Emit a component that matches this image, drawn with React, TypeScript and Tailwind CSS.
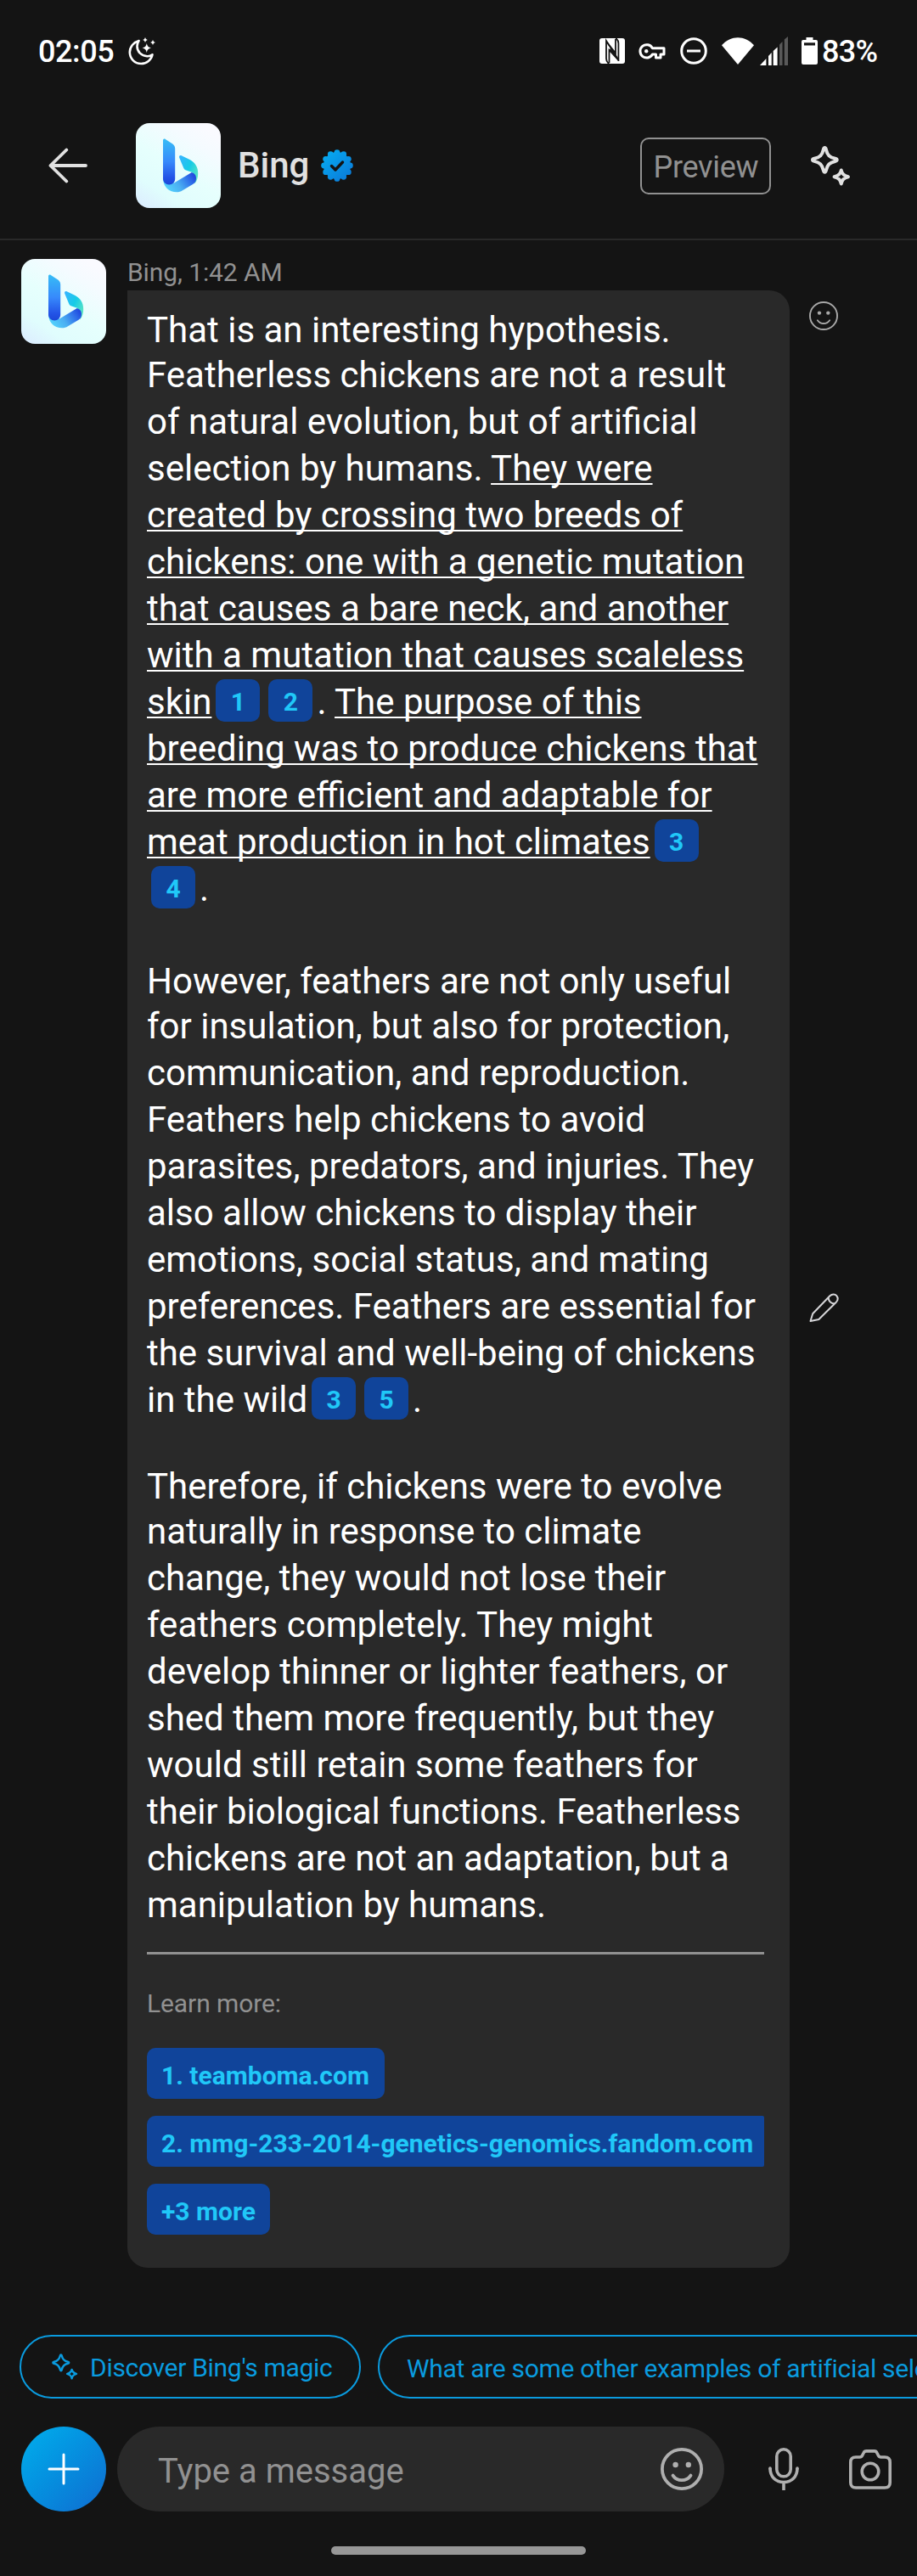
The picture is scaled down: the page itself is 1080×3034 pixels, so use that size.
import React, { useId } from "react";

function BingLogo() {
  const id = useId().replace(/[^a-zA-Z0-9]/g, "");
  return (
    <svg className="block size-[100px] shrink-0" viewBox="0 0 100 100">
      <defs>
        <linearGradient id={id + "bg"} x1="0.1" y1="1" x2="0.75" y2="0">
          <stop offset="0" stopColor="#dceeff" />
          <stop offset="0.22" stopColor="#e0fdfd" />
          <stop offset="0.5" stopColor="#e6fffd" />
          <stop offset="0.8" stopColor="#f4fbff" />
          <stop offset="1" stopColor="#fafaff" />
        </linearGradient>
        <linearGradient id={id + "stem"} x1="0" y1="0" x2="0" y2="1">
          <stop offset="0" stopColor="#37bdf6" />
          <stop offset="0.5" stopColor="#3789fb" />
          <stop offset="0.85" stopColor="#2353e6" />
          <stop offset="1" stopColor="#1b48d8" />
        </linearGradient>
        <linearGradient id={id + "base"} x1="0" y1="0.6" x2="1" y2="0.2">
          <stop offset="0.05" stopColor="#52cffb" />
          <stop offset="0.4" stopColor="#4aaef2" />
          <stop offset="0.75" stopColor="#2f70ea" />
          <stop offset="1" stopColor="#1f45dc" />
        </linearGradient>
        <linearGradient id={id + "wing"} x1="0" y1="0.1" x2="1" y2="0.8">
          <stop offset="0" stopColor="#36b5ff" />
          <stop offset="0.5" stopColor="#17cbe6" />
          <stop offset="1" stopColor="#62e8c0" />
        </linearGradient>
      </defs>
      <rect width="100" height="100" rx="16" fill={`url(#${id}bg)`} />
      <path
        d="M53.7 38.3 L63.5 43 C70 46.5 73.2 52 73.2 59 C73.2 64 72 68.5 69 71.5 L70.5 63 L66.5 58 L58.5 55.2 C57.2 54.6 56.7 54 56.2 52.8 L51.2 40.8 C50.5 38.8 52 37.5 53.7 38.3 Z"
        fill={`url(#${id}wing)`}
      />
      <path
        d="M32.2 66 C32.5 75.5 39.5 81.3 48 81.3 C50.8 81.3 52.8 80.5 55 79.2 L67.5 71.8 C70.5 70 71 67.8 71 64.5 C71 61.5 69 58.8 65.8 58 L45 70.6 Z"
        fill={`url(#${id}base)`}
      />
      <path
        d="M34.8 18.9 L43.3 24.4 C45.3 25.8 46.2 27.8 46.2 30 V65.5 C46.2 69.5 43.2 72.5 39.2 72.5 C35.3 72.5 32 69.5 32 65.5 V20.3 C32 18.8 33.6 18.1 34.8 18.9 Z"
        fill={`url(#${id}stem)`}
      />
    </svg>
  );
}

function Sparkles({ className, strokeWidth }: { className: string; strokeWidth: number }) {
  return (
    <svg
      className={className}
      viewBox="0 0 46 46"
      fill="none"
      stroke="currentColor"
      strokeWidth={strokeWidth}
      strokeLinejoin="round"
    >
      <path d="M16 2 C16.8 2 17.2 2.6 17.5 4 C19 10.5 21.5 13 28 14.5 C29.4 14.8 30 15.2 30 16 C30 16.8 29.4 17.2 28 17.5 C21.5 19 19 21.5 17.5 28 C17.2 29.4 16.8 30 16 30 C15.2 30 14.8 29.4 14.5 28 C13 21.5 10.5 19 4 17.5 C2.6 17.2 2 16.8 2 16 C2 15.2 2.6 14.8 4 14.5 C10.5 13 13 10.5 14.5 4 C14.8 2.6 15.2 2 16 2 Z" />
      <path d="M35 28 C35.8 31.6 37.2 34 43 35.5 C37.2 37 35.8 39.4 35 43.5 C34.2 39.4 32.8 37 27 35.5 C32.8 34 34.2 31.6 35 28 Z" />
    </svg>
  );
}

function Smiley({ className, strokeWidth }: { className: string; strokeWidth: number }) {
  return (
    <svg className={className} viewBox="0 0 50 50" fill="none" stroke="currentColor" strokeWidth={strokeWidth} strokeLinecap="round">
      <circle cx="25" cy="25" r={25 - strokeWidth / 2} />
      <circle cx="17.6" cy="20" r="3.2" fill="currentColor" stroke="none" />
      <circle cx="32.8" cy="20" r="3.2" fill="currentColor" stroke="none" />
      <path d="M14.5 32.6 C19.5 40 30.5 40 35.5 32.6" />
    </svg>
  );
}

const bumps = Array.from({ length: 12 }, (_, i) => (i * Math.PI) / 6);

function VerifiedBadge() {
  const id = useId().replace(/[^a-zA-Z0-9]/g, "");
  return (
    <svg className="ml-[14px] h-[38px] w-[38px]" viewBox="0 0 38 38">
      <defs>
        <linearGradient id={id} gradientUnits="userSpaceOnUse" x1="4" y1="4" x2="32" y2="34">
          <stop offset="0" stopColor="#06aaf0" />
          <stop offset="1" stopColor="#0a7ddb" />
        </linearGradient>
      </defs>
      <g fill={`url(#${id})`}>
        <circle cx="19" cy="19" r="16" />
        {bumps.map((a) => (
          <circle key={a} cx={19 + 15.4 * Math.sin(a)} cy={19 - 15.4 * Math.cos(a)} r="3.4" />
        ))}
      </g>
      <path d="M12.5 19.5 L17 24 L25.5 15" fill="none" stroke="#141414" strokeWidth="3.4" strokeLinecap="round" strokeLinejoin="round" />
    </svg>
  );
}

function StatusBar() {
  return (
    <div className="flex h-[120px] items-center pl-[45px] text-[36px] font-medium text-white">
      <span className="w-[106px] pt-[2px] tracking-[-0.4px]">02:05</span>
      <svg className="size-[33px]" viewBox="0 0 33 33" fill="none">
        <path
          d="M12.6 4 C6.5 5.7 1.8 11 1.8 17.6 C1.8 25 7.7 31 15.2 31 C21.8 31 27.3 26.3 28.5 20.2 C26.8 21.6 24.6 22.4 22.2 22.2 C15.5 21.8 10.5 17 10.5 10.5 C10.5 8 11.3 5.8 12.6 4 Z"
          stroke="#fff"
          strokeWidth="2.6"
          strokeLinejoin="round"
        />
        <g fill="#fff">
          <path d="M21.8 7 C22.5 10.3 23.6 11.6 27 12.4 C23.6 13.2 22.5 14.5 21.8 18 C21.1 14.5 20 13.2 16.6 12.4 C20 11.6 21.1 10.3 21.8 7 Z" />
          <path d="M20 0 Q20.5 2.4 22.8 3 Q20.5 3.6 20 6 Q19.5 3.6 17.2 3 Q19.5 2.4 20 0 Z" />
          <path d="M29 3 Q29.5 5.4 31.9 6 Q29.5 6.6 29 9 Q28.5 6.6 26.1 6 Q28.5 5.4 29 3 Z" />
        </g>
      </svg>
      <svg className="ml-[522px] size-[30px]" viewBox="0 0 30 30" fill="none">
        <rect width="30" height="30" rx="3" fill="#fff" />
        <g stroke="#141414" strokeWidth="1.8">
          <path d="M11.3 30 C9 28.6 8 27 8 24 V3 L22.4 25.6" />
          <path d="M19.2 0 C21.4 1.5 22.4 3.2 22.4 6 V27" />
          <path d="M11.5 29 V14 L22 25.5" />
          <path d="M19 1 V17.5 L8.5 4.5" />
          <path d="M12 13 L19.3 20.4" />
        </g>
      </svg>
      <svg className="ml-4 h-[19px] w-[32px]" viewBox="0 0 32 19" fill="none" stroke="#fff" strokeWidth="3" strokeLinejoin="round">
        <path d="M16.4 5.7 A7.7 7.7 0 1 0 16.4 13 H20.5 V17 H26 V13 H30 V5.7 Z" />
        <circle cx="9.2" cy="9.3" r="2.2" fill="#fff" stroke="none" />
      </svg>
      <svg className="ml-[17px] size-[32px]" viewBox="0 0 32 32" fill="none" stroke="#fff">
        <circle cx="16" cy="16" r="14.3" strokeWidth="3" />
        <path d="M8 16 H24" strokeWidth="3" />
      </svg>
      <svg className="ml-[17px] h-8 w-[38px]" viewBox="0 0 38 32">
        <path d="M19 32 L0 9.3 C11 -2.7 27 -2.7 38 9.3 Z" fill="#fff" />
      </svg>
      <svg className="ml-[7px] h-[34px] w-[33px]" viewBox="0 0 33 34">
        <path d="M0 34 L7.4 26 V34 Z" fill="#fff" />
        <path d="M10 34 V23 L13.7 19 V34 Z" fill="#fff" />
        <path d="M15.7 34 V17 L20.6 12.5 V34 Z" fill="#fff" />
        <path d="M23 34 V9.5 L26.5 6 V34 Z" fill="#595959" />
        <path d="M28.8 34 V3.5 L33 0 V34 Z" fill="#595959" />
      </svg>
      <svg className="ml-4 h-8 w-[19px]" viewBox="0 0 19 32">
        <path d="M5.5 0 H13.5 V3 H17 Q19 3 19 5 V30 Q19 32 17 32 H2 Q0 32 0 30 V5 Q0 3 2 3 H5.5 Z" fill="#fff" />
        <path d="M3 6.3 H16 V9.5 H3 Z" fill="#141414" />
      </svg>
      <span className="ml-[5px] pt-[2px] tracking-[-0.7px]">83%</span>
    </div>
  );
}

function Header() {
  return (
    <div className="flex h-[163px] items-start border-b-2 border-[#292929] pt-[25px]">
      <div className="flex h-[100px] w-full items-center pl-[57px]">
        <svg className="h-[42px] w-[46px]" viewBox="0 0 46 42" fill="none" stroke="#e1e1e1" strokeWidth="3.8" strokeLinecap="round" strokeLinejoin="round">
          <path d="M44 21 H2.5 M21.3 2.5 L2.5 21 L21.3 39.5" />
        </svg>
        <div className="ml-[57px]">
          <BingLogo />
        </div>
        <span className="ml-5 text-[42px] leading-[50px] font-medium text-[#e1e1e1]">Bing</span>
        <VerifiedBadge />
        <div className="ml-[338px] flex h-[67px] w-[154px] items-center justify-center rounded-[10px] border-2 border-[#919191] pt-[3px] text-[36px] tracking-[-0.3px] text-[#919191]">
          Preview
        </div>
        <Sparkles className="ml-[47px] size-[47px] text-[#e1e1e1]" strokeWidth={4} />
      </div>
    </div>
  );
}

function Cite({ n }: { n: number }) {
  return (
    <span className="mx-[5px] mt-px inline-flex h-[50px] w-[52px] items-center justify-center rounded-[10px] bg-[#10449a] pt-[4px] align-top text-[30px] leading-[46px] font-bold text-[#20c8f8]">
      {n}
    </span>
  );
}

function U({ children }: { children: React.ReactNode }) {
  return (
    <span className="underline decoration-2 underline-offset-[3px] [text-decoration-skip-ink:none]">{children}</span>
  );
}

function Paragraph({ lines }: { lines: React.ReactNode[] }) {
  return (
    <p className="text-[42px] text-white">
      {lines.map((line, i) => (
        <span key={i} className="block h-[55px] leading-[55px] whitespace-nowrap first:h-[52px] first:leading-[54px]">
          {line}
        </span>
      ))}
    </p>
  );
}

const first = [
  "That is an interesting hypothesis.",
  "Featherless chickens are not a result",
  "of natural evolution, but of artificial",
  <>selection by humans. <U>They were</U></>,
  <U>created by crossing two breeds of</U>,
  <U>chickens: one with a genetic mutation</U>,
  <U>that causes a bare neck, and another</U>,
  <U>with a mutation that causes scaleless</U>,
  <><U>skin</U><Cite n={1} /><Cite n={2} />. <U>The purpose of this</U></>,
  <U>breeding was to produce chickens that</U>,
  <U>are more efficient and adaptable for</U>,
  <><U>meat production in hot climates</U><Cite n={3} /></>,
  <><Cite n={4} />.</>,
];

const second = [
  "However, feathers are not only useful",
  "for insulation, but also for protection,",
  "communication, and reproduction.",
  "Feathers help chickens to avoid",
  "parasites, predators, and injuries. They",
  "also allow chickens to display their",
  "emotions, social status, and mating",
  "preferences. Feathers are essential for",
  "the survival and well-being of chickens",
  <>in the wild<Cite n={3} /><Cite n={5} />.</>,
];

const third = [
  "Therefore, if chickens were to evolve",
  "naturally in response to climate",
  "change, they would not lose their",
  "feathers completely. They might",
  "develop thinner or lighter feathers, or",
  "shed them more frequently, but they",
  "would still retain some feathers for",
  "their biological functions. Featherless",
  "chickens are not an adaptation, but a",
  "manipulation by humans.",
];

const linkClass =
  "flex h-[60px] items-center bg-[#10449a] px-[17px] pt-[5px] text-[30px] font-bold whitespace-nowrap text-[#20c8f8]";

function Message() {
  return (
    <div className="flex items-start">
      <div className="mt-[22px] ml-[25px]">
        <BingLogo />
      </div>
      <div className="ml-[25px] w-[780px]">
        <div className="h-[59px] pt-4 text-[30px] leading-[44px] tracking-[-0.1px] text-[#919191]">Bing, 1:42 AM</div>
        <div className="h-[2329px] rounded-[24px] rounded-tl-none bg-[#292929] pt-5 pr-[30px] pl-[23px]">
          <Paragraph lines={first} />
          <div className="h-[55px]" />
          <Paragraph lines={second} />
          <div className="h-12" />
          <Paragraph lines={third} />
          <div className="mt-7 h-[3px] bg-[#919191]" />
          <div className="mt-9 h-[44px] text-[30px] leading-[44px] tracking-[-0.1px] text-[#919191]">Learn more:</div>
          <div className="mt-[30px] flex flex-col items-start gap-5">
            <div className={linkClass + " w-[280px] rounded-[10px]"}>1. teamboma.com</div>
            <div className={linkClass + " w-full rounded-l-[10px] rounded-r-[2px]"}>2. mmg-233-2014-genetics-genomics.fandom.com</div>
            <div className={linkClass + " w-[145px] rounded-[10px]"}>+3 more</div>
          </div>
        </div>
      </div>
      <div className="ml-[23px] flex flex-col">
        <Smiley className="mt-[72px] size-[34px] text-[#a8a8a8]" strokeWidth={2.8} />
        <svg className="mt-[1134px] size-[35px]" viewBox="0 0 35 35" fill="none" stroke="#d6d6d9" strokeWidth="2" strokeLinejoin="round">
          <path d="M1.5 33 L4.2 24.3 L24.4 3.3 C27 .8 30.5 1 32.3 3.2 C34.2 5.6 33.8 8.5 31.8 10.7 L11.3 31 Z" />
          <path d="M22.6 5.3 C23 9.5 25.5 12 29.9 12.5" />
        </svg>
      </div>
    </div>
  );
}

function Suggestions() {
  const pill = "flex h-[75px] shrink-0 items-center rounded-full border-[2.5px] border-[#0a9bdf] text-[30px] tracking-[-0.3px] whitespace-nowrap text-[#0a9bdf]";
  return (
    <div className="mt-[79px] flex gap-5 overflow-hidden pl-[23px]">
      <div className={pill + " w-[402px] pl-9"}>
        <Sparkles className="size-[31px]" strokeWidth={3.6} />
        <span className="ml-[14px] pt-[2px]">Discover Bing's magic</span>
      </div>
      <div className={pill + " w-[760px] pl-8"}>
        <span className="pt-[3px]">What are some other examples of artificial selection?</span>
      </div>
    </div>
  );
}

function Composer() {
  return (
    <div className="mt-[33px] flex h-[100px] items-center pl-[25px]">
      <div className="flex size-[100px] items-center justify-center rounded-full bg-linear-to-br from-[#02afec] to-[#106cd0]">
        <svg className="size-[38px]" viewBox="0 0 38 38" stroke="#fff" strokeWidth="3" strokeLinecap="round">
          <path d="M19 2 V36 M2 19 H36" />
        </svg>
      </div>
      <div className="ml-[13px] flex h-[100px] w-[715px] items-center justify-between rounded-full bg-[#292929] pr-[25px] pl-[48px]">
        <span className="pt-[6px] text-[40px] text-[#919191]">Type a message</span>
        <Smiley className="size-[50px] text-[#afafaf]" strokeWidth={3.8} />
      </div>
      <svg className="ml-[52px] h-[50px] w-[36px]" viewBox="0 0 36 50" fill="none" stroke="#afafaf" strokeWidth="3.6" strokeLinecap="round">
        <rect x="9.8" y="1.8" width="16.4" height="32" rx="8.2" />
        <path d="M2 24 C2 34 8.5 40.5 18 40.5 C27.5 40.5 34 34 34 24 M18 41 V50" strokeLinecap="butt" />
        <path d="M2 24 V24.5 M34 24 V24.5" />
      </svg>
      <svg className="ml-[59px] h-[48px] w-[50px]" viewBox="0 0 50 48" fill="none" stroke="#afafaf" strokeWidth="3.6" strokeLinejoin="round">
        <path d="M8 10 H12.5 C14 10 15 9.3 15.6 8 L17 5.2 C17.7 3.6 18.6 2.9 20.2 2.9 H29.8 C31.4 2.9 32.3 3.6 33 5.2 L34.4 8 C35 9.3 36 10 37.5 10 H42 C46 10 48.2 12.2 48.2 16 V40 C48.2 44 46 46 42 46 H8 C4 46 1.8 44 1.8 40 V16 C1.8 12.2 4 10 8 10 Z" />
        <circle cx="25" cy="27" r="9.8" />
      </svg>
    </div>
  );
}

export default function App() {
  return (
    <div className="h-[3034px] w-[1080px] overflow-hidden bg-[#141414] font-['Roboto',sans-serif]">
      <StatusBar />
      <Header />
      <Message />
      <Suggestions />
      <Composer />
      <div className="mx-auto mt-[41px] h-[10px] w-[300px] rounded-full bg-[#979797]" />
    </div>
  );
}
